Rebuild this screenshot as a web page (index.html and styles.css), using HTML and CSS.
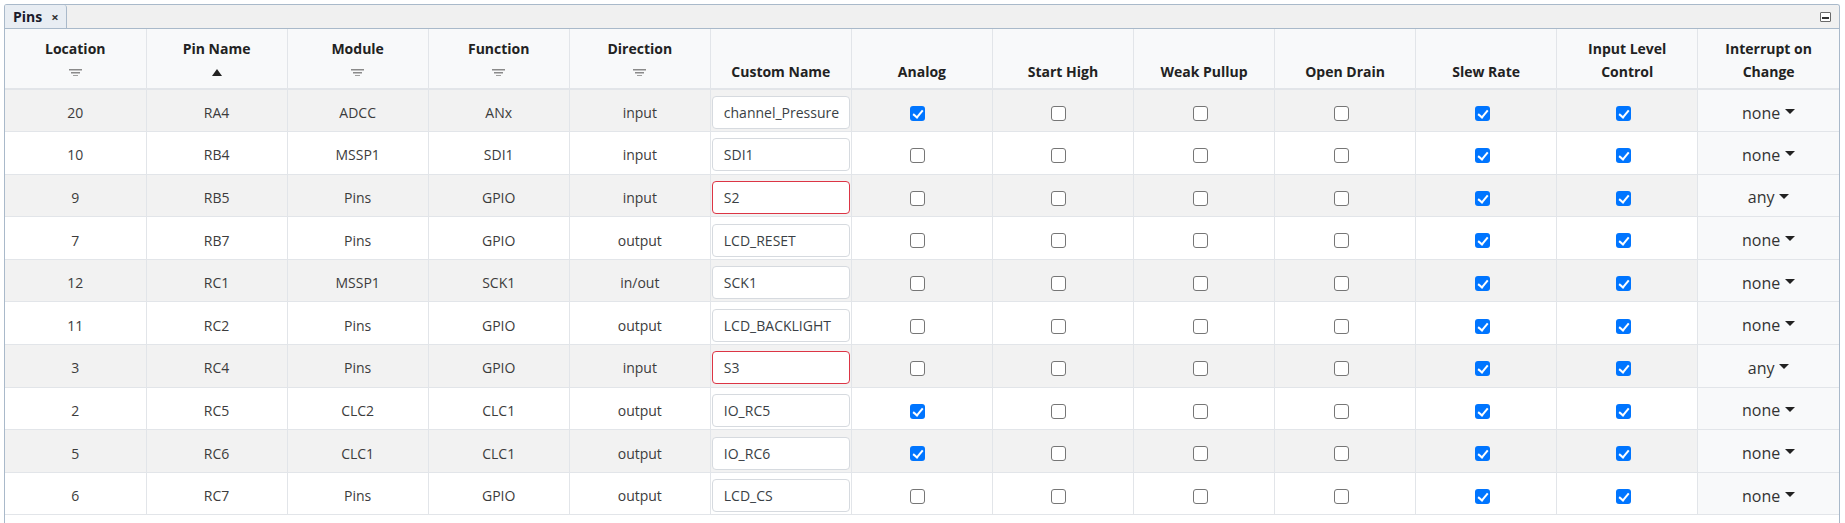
FILE: index.html
```html
<!DOCTYPE html>
<html>
<head>
<meta charset="utf-8">
<link rel="stylesheet" href="styles.css">
</head>
<body>
<div class="panel">
  <div class="tabbar">
    <div class="tab"><span class="tab-title">Pins</span><span class="tab-close">×</span></div>
    <div class="minimize"><span class="min-bar"></span></div>
  </div>
  <table class="grid">
    <thead>
      <tr>
        <th><div class="hl">Location</div><div class="hl"><span class="filter"></span></div></th>
        <th><div class="hl">Pin Name</div><div class="hl"><span class="sort-up"></span></div></th>
        <th><div class="hl">Module</div><div class="hl"><span class="filter"></span></div></th>
        <th><div class="hl">Function</div><div class="hl"><span class="filter"></span></div></th>
        <th><div class="hl">Direction</div><div class="hl"><span class="filter"></span></div></th>
        <th><div class="hl">Custom Name</div></th>
        <th><div class="hl">Analog</div></th>
        <th><div class="hl">Start High</div></th>
        <th><div class="hl">Weak Pullup</div></th>
        <th><div class="hl">Open Drain</div></th>
        <th><div class="hl">Slew Rate</div></th>
        <th><div class="hl">Input Level</div><div class="hl">Control</div></th>
        <th><div class="hl">Interrupt on</div><div class="hl">Change</div></th>
      </tr>
    </thead>
    <tbody>
      <tr class="alt">
        <td>20</td><td>RA4</td><td>ADCC</td><td>ANx</td><td>input</td>
        <td class="name"><div class="field">channel_Pressure</div></td>
        <td><span class="cb on"></span></td><td><span class="cb"></span></td><td><span class="cb"></span></td><td><span class="cb"></span></td>
        <td><span class="cb on"></span></td><td><span class="cb on"></span></td>
        <td class="ioc"><span class="dd">none</span></td>
      </tr>
      <tr>
        <td>10</td><td>RB4</td><td>MSSP1</td><td>SDI1</td><td>input</td>
        <td class="name"><div class="field">SDI1</div></td>
        <td><span class="cb"></span></td><td><span class="cb"></span></td><td><span class="cb"></span></td><td><span class="cb"></span></td>
        <td><span class="cb on"></span></td><td><span class="cb on"></span></td>
        <td class="ioc"><span class="dd">none</span></td>
      </tr>
      <tr class="alt">
        <td>9</td><td>RB5</td><td>Pins</td><td>GPIO</td><td>input</td>
        <td class="name"><div class="field invalid">S2</div></td>
        <td><span class="cb"></span></td><td><span class="cb"></span></td><td><span class="cb"></span></td><td><span class="cb"></span></td>
        <td><span class="cb on"></span></td><td><span class="cb on"></span></td>
        <td class="ioc"><span class="dd">any</span></td>
      </tr>
      <tr>
        <td>7</td><td>RB7</td><td>Pins</td><td>GPIO</td><td>output</td>
        <td class="name"><div class="field">LCD_RESET</div></td>
        <td><span class="cb"></span></td><td><span class="cb"></span></td><td><span class="cb"></span></td><td><span class="cb"></span></td>
        <td><span class="cb on"></span></td><td><span class="cb on"></span></td>
        <td class="ioc"><span class="dd">none</span></td>
      </tr>
      <tr class="alt">
        <td>12</td><td>RC1</td><td>MSSP1</td><td>SCK1</td><td>in/out</td>
        <td class="name"><div class="field">SCK1</div></td>
        <td><span class="cb"></span></td><td><span class="cb"></span></td><td><span class="cb"></span></td><td><span class="cb"></span></td>
        <td><span class="cb on"></span></td><td><span class="cb on"></span></td>
        <td class="ioc"><span class="dd">none</span></td>
      </tr>
      <tr>
        <td>11</td><td>RC2</td><td>Pins</td><td>GPIO</td><td>output</td>
        <td class="name"><div class="field">LCD_BACKLIGHT</div></td>
        <td><span class="cb"></span></td><td><span class="cb"></span></td><td><span class="cb"></span></td><td><span class="cb"></span></td>
        <td><span class="cb on"></span></td><td><span class="cb on"></span></td>
        <td class="ioc"><span class="dd">none</span></td>
      </tr>
      <tr class="alt">
        <td>3</td><td>RC4</td><td>Pins</td><td>GPIO</td><td>input</td>
        <td class="name"><div class="field invalid">S3</div></td>
        <td><span class="cb"></span></td><td><span class="cb"></span></td><td><span class="cb"></span></td><td><span class="cb"></span></td>
        <td><span class="cb on"></span></td><td><span class="cb on"></span></td>
        <td class="ioc"><span class="dd">any</span></td>
      </tr>
      <tr>
        <td>2</td><td>RC5</td><td>CLC2</td><td>CLC1</td><td>output</td>
        <td class="name"><div class="field">IO_RC5</div></td>
        <td><span class="cb on"></span></td><td><span class="cb"></span></td><td><span class="cb"></span></td><td><span class="cb"></span></td>
        <td><span class="cb on"></span></td><td><span class="cb on"></span></td>
        <td class="ioc"><span class="dd">none</span></td>
      </tr>
      <tr class="alt">
        <td>5</td><td>RC6</td><td>CLC1</td><td>CLC1</td><td>output</td>
        <td class="name"><div class="field">IO_RC6</div></td>
        <td><span class="cb on"></span></td><td><span class="cb"></span></td><td><span class="cb"></span></td><td><span class="cb"></span></td>
        <td><span class="cb on"></span></td><td><span class="cb on"></span></td>
        <td class="ioc"><span class="dd">none</span></td>
      </tr>
      <tr>
        <td>6</td><td>RC7</td><td>Pins</td><td>GPIO</td><td>output</td>
        <td class="name"><div class="field">LCD_CS</div></td>
        <td><span class="cb"></span></td><td><span class="cb"></span></td><td><span class="cb"></span></td><td><span class="cb"></span></td>
        <td><span class="cb on"></span></td><td><span class="cb on"></span></td>
        <td class="ioc"><span class="dd">none</span></td>
      </tr>
    </tbody>
  </table>
</div>
</body>
</html>
```
FILE: styles.css
```css
html, body {
  margin: 0;
  padding: 0;
  background: #ffffff;
}
body {
  font-family: "Open Sans", "Noto Sans", sans-serif;
  font-size: 14px;
  color: #3a3a3a;
}
.panel {
  margin: 4px 5px 0 4px;
  height: 519px;
  box-sizing: border-box;
  border: 1px solid #a9b9ca;
  border-bottom: none;
  border-radius: 3px 3px 0 0;
  overflow: hidden;
}
.tabbar {
  height: 24px;
  box-sizing: border-box;
  background: #f0f0f0;
  border-bottom: 1px solid #a9b9ca;
  display: flex;
  align-items: stretch;
  justify-content: space-between;
}
.tab {
  display: flex;
  align-items: center;
  gap: 9px;
  padding: 0 8px 0 8px;
  background: #e8edf3;
  border-right: 1px solid #a9b9ca;
  border-radius: 0 3px 0 0;
  width: 62px;
  box-sizing: border-box;
}
.tab-title {
  font-weight: 700;
  font-size: 14px;
  color: #1a1a2a;
}
.tab-close {
  font-weight: 700;
  font-size: 13px;
  color: #333;
}
.minimize {
  align-self: center;
  width: 11px;
  height: 10px;
  box-sizing: border-box;
  border: 1px solid #6a6a6a;
  border-radius: 1px;
  background: #ffffff;
  margin-right: 8px;
  display: flex;
  align-items: flex-end;
  justify-content: center;
  padding-bottom: 2px;
}
.min-bar {
  width: 7px;
  height: 2px;
  background: #333;
}
.grid {
  width: 100%;
  table-layout: fixed;
  border-collapse: collapse;
}
.grid th {
  height: 59px;
  box-sizing: border-box;
  background: #f8f9fa;
  font-weight: 700;
  color: #222;
  text-align: center;
  vertical-align: bottom;
  padding: 8px 2px 5px;
  border-left: 1px solid #e2e5e9;
  border-bottom: 2px solid #e2e5e9;
}
.grid th:first-child,
.grid td:first-child {
  border-left: none;
}
.hl {
  height: 23px;
  line-height: 23px;
  display: flex;
  align-items: center;
  justify-content: center;
}
.filter {
  width: 13px;
  height: 7px;
  background:
    linear-gradient(#8a8a8a, #8a8a8a) center 0 / 13px 1.5px no-repeat,
    linear-gradient(#8a8a8a, #8a8a8a) center 3px / 9px 1.5px no-repeat,
    linear-gradient(#a0a0a0, #a0a0a0) center 6px / 5px 1px no-repeat;
  margin-top: 1px;
}
.sort-up {
  width: 0;
  height: 0;
  border-left: 5px solid transparent;
  border-right: 5px solid transparent;
  border-bottom: 7px solid #222;
  margin-top: 1px;
}
.grid td {
  height: 42.6px;
  box-sizing: border-box;
  padding: 4px 1px 0;
  text-align: center;
  vertical-align: middle;
  border-left: 1px solid #e2e5e9;
  border-bottom: 1px solid #e2e5e9;
  color: #3c3c3c;
}
.grid tr.alt td {
  background: #f2f2f2;
}
.grid td.ioc,
.grid tr.alt td.ioc {
  background: #f8f9fa;
}
.grid td.name {
  padding: 4px 1px 0;
}
.field {
  height: 33px;
  box-sizing: border-box;
  border: 1px solid #d6dadf;
  border-radius: 4px;
  background: #ffffff;
  text-align: left;
  padding: 0 11px;
  line-height: 31px;
  color: #3a3f45;
  white-space: nowrap;
  overflow: hidden;
}
.field.invalid {
  border-color: #dc3545;
}
.cb {
  display: inline-block;
  width: 15px;
  height: 15px;
  box-sizing: border-box;
  border: 1px solid #767676;
  border-radius: 3px;
  background: #ffffff;
  margin-right: 8px;
  vertical-align: middle;
  position: relative;
  top: -1px;
}
.cb.on {
  border: none;
  background: #0075ff;
}
.cb.on::after {
  content: "";
  position: absolute;
  left: 5px;
  top: 2px;
  width: 4px;
  height: 8px;
  border-right: 2px solid #fff;
  border-bottom: 2px solid #fff;
  transform: rotate(40deg);
}
.dd {
  font-size: 16px;
  color: #333;
}
.dd::after {
  content: "";
  display: inline-block;
  margin-left: 5px;
  vertical-align: 0.3em;
  border-top: 5px solid #222;
  border-left: 5px solid transparent;
  border-right: 5px solid transparent;
}
```
